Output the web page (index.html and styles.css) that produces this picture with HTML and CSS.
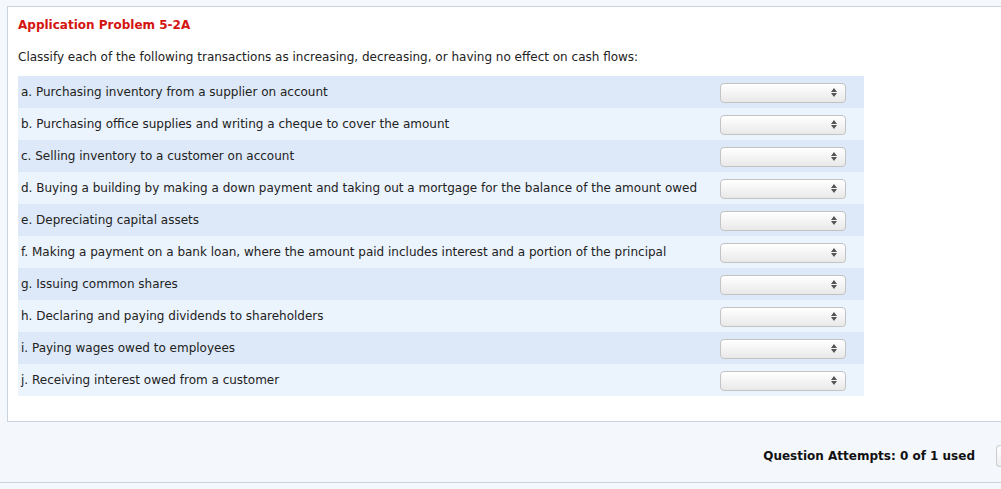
FILE: index.html
```html
<!DOCTYPE html>
<html>
<head>
<meta charset="utf-8">
<link rel="stylesheet" href="styles.css">
</head>
<body>
<div class="panel">
  <h1 class="title">Application Problem 5-2A</h1>
  <p class="intro">Classify each of the following transactions as increasing, decreasing, or having no effect on cash flows:</p>
  <div class="table">
    <div class="row"><span class="label">a. Purchasing inventory from a supplier on account</span><span class="select"><span class="arrows"></span></span></div>
    <div class="row"><span class="label">b. Purchasing office supplies and writing a cheque to cover the amount</span><span class="select"><span class="arrows"></span></span></div>
    <div class="row"><span class="label">c. Selling inventory to a customer on account</span><span class="select"><span class="arrows"></span></span></div>
    <div class="row"><span class="label">d. Buying a building by making a down payment and taking out a mortgage for the balance of the amount owed</span><span class="select"><span class="arrows"></span></span></div>
    <div class="row"><span class="label">e. Depreciating capital assets</span><span class="select"><span class="arrows"></span></span></div>
    <div class="row"><span class="label">f. Making a payment on a bank loan, where the amount paid includes interest and a portion of the principal</span><span class="select"><span class="arrows"></span></span></div>
    <div class="row"><span class="label">g. Issuing common shares</span><span class="select"><span class="arrows"></span></span></div>
    <div class="row"><span class="label">h. Declaring and paying dividends to shareholders</span><span class="select"><span class="arrows"></span></span></div>
    <div class="row"><span class="label">i. Paying wages owed to employees</span><span class="select"><span class="arrows"></span></span></div>
    <div class="row"><span class="label">j. Receiving interest owed from a customer</span><span class="select"><span class="arrows"></span></span></div>
  </div>
</div>
<div class="footer">
  <span class="attempts">Question Attempts: 0 of 1 used</span>
  <span class="btn"></span>
</div>
</body>
</html>
```
FILE: styles.css
```css
html, body {
  margin: 0;
  padding: 0;
  background: #f4f7fb;
  font-family: "DejaVu Sans", Verdana, sans-serif;
  color: #222;
  overflow: hidden;
}
.panel {
  margin: 6px 0 0 7px;
  background: #fff;
  border: 1px solid #c9d3de;
  border-right: none;
  padding: 10px 0 25px 10px;
}
.title {
  margin: 0;
  font-size: 12px;
  font-weight: bold;
  color: #d4140f;
  line-height: 16px;
}
.intro {
  margin: 16px 0 0 0;
  font-size: 12px;
  line-height: 16px;
  color: #222;
}
.table {
  margin-top: 11px;
  width: 846px;
}
.row {
  height: 32px;
  display: flex;
  align-items: center;
  justify-content: space-between;
  background: #dde9f8;
  font-size: 12px;
}
.row:nth-child(even) {
  background: #ebf3fd;
}
.label {
  padding-left: 3px;
  margin-top: -1px;
}
.select {
  position: relative;
  width: 126px;
  height: 20px;
  margin-top: 1px;
  margin-right: 18px;
  border: 1px solid #c3c3c3;
  border-radius: 4px;
  background: linear-gradient(#ffffff, #e9e9e9);
  box-shadow: inset 0 1px 0 #fff;
  box-sizing: border-box;
}
.arrows {
  position: absolute;
  right: 8px;
  top: 4px;
  width: 0;
  height: 0;
  border-left: 3px solid transparent;
  border-right: 3px solid transparent;
  border-bottom: 4px solid #555;
}
.arrows::after {
  content: "";
  position: absolute;
  left: -3px;
  top: 5px;
  border-left: 3px solid transparent;
  border-right: 3px solid transparent;
  border-top: 4px solid #555;
}
.footer {
  height: 61px;
  border-bottom: 1px solid #c9d3de;
  display: flex;
  align-items: center;
  justify-content: flex-end;
  padding-top: 8px;
  box-sizing: border-box;
}
.attempts {
  font-size: 12px;
  font-weight: bold;
  color: #111;
  margin-right: 21px;
}
.btn {
  width: 10px;
  height: 20px;
  border: 1px solid #ccc;
  border-right: none;
  border-radius: 4px 0 0 4px;
  background: linear-gradient(#fff, #eee);
  margin-right: -6px;
}
```
